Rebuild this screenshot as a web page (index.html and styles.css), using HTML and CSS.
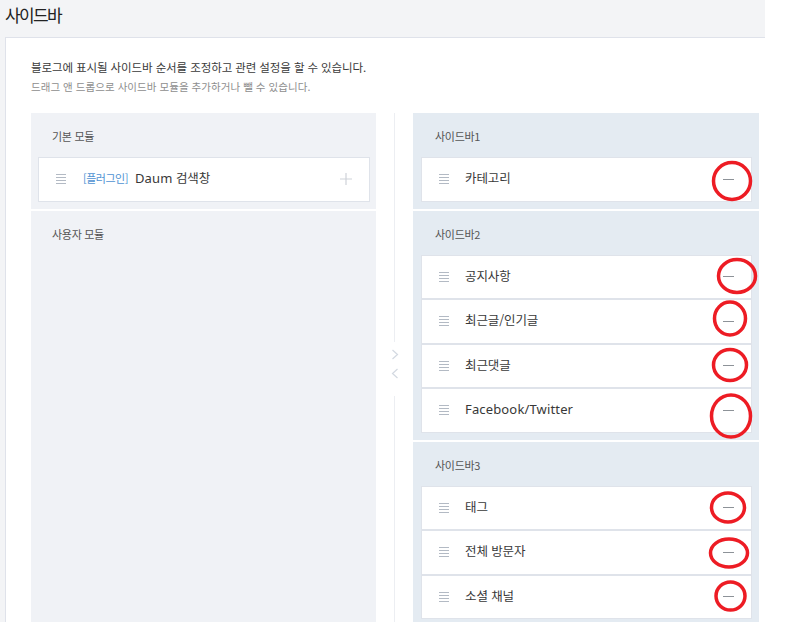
FILE: index.html
```html
<!DOCTYPE html>
<html lang="ko">
<head>
<meta charset="utf-8">
<title>사이드바</title>
<link rel="stylesheet" href="styles.css">
</head>
<body>
<div class="page">
  <div class="topbar"><h1 class="title">사이드바</h1></div>
  <div class="card">
    <p class="desc">블로그에 표시될 사이드바 순서를 조정하고 관련 설정을 할 수 있습니다.</p>
    <p class="sub">드래그 앤 드롭으로 사이드바 모듈을 추가하거나 뺄 수 있습니다.</p>
    <div class="board">
      <div class="col col-left">
        <section class="group">
          <h2 class="group-title">기본 모듈</h2>
          <ul class="list">
            <li class="item">
              <svg class="handle" width="10" height="10" viewBox="0 0 10 10"><path d="M0 0.5H10M0 3.5H10M0 6.5H10M0 9.5H10" stroke="#b3bac4" stroke-width="1"/></svg>
              <span class="tag">[플러그인]</span><span class="name"><span class="latin">Daum</span> 검색창</span>
              <svg class="plus" width="12" height="12" viewBox="0 0 12 12"><path d="M6 0V12M0 6H12" stroke="#cfd3d9" stroke-width="1.2"/></svg>
            </li>
          </ul>
        </section>
        <section class="group grow">
          <h2 class="group-title">사용자 모듈</h2>
        </section>
      </div>
      <div class="divider">
        <div class="vline top"></div>
        <div class="arrows">
          <svg width="8" height="11" viewBox="0 0 8 11"><polyline points="1.5,1 6.5,5.5 1.5,10" fill="none" stroke="#d3d9e1" stroke-width="1.2"/></svg>
          <svg width="8" height="11" viewBox="0 0 8 11"><polyline points="6.5,1 1.5,5.5 6.5,10" fill="none" stroke="#d3d9e1" stroke-width="1.2"/></svg>
        </div>
        <div class="vline rest"></div>
      </div>
      <div class="col col-right">
        <section class="group">
          <h2 class="group-title">사이드바1</h2>
          <ul class="list">
            <li class="item"><svg class="handle" width="10" height="10" viewBox="0 0 10 10"><path d="M0 0.5H10M0 3.5H10M0 6.5H10M0 9.5H10" stroke="#b3bac4" stroke-width="1"/></svg><span class="name">카테고리</span><span class="minus"></span></li>
          </ul>
        </section>
        <section class="group">
          <h2 class="group-title">사이드바2</h2>
          <ul class="list">
            <li class="item"><svg class="handle" width="10" height="10" viewBox="0 0 10 10"><path d="M0 0.5H10M0 3.5H10M0 6.5H10M0 9.5H10" stroke="#b3bac4" stroke-width="1"/></svg><span class="name">공지사항</span><span class="minus"></span></li>
            <li class="item"><svg class="handle" width="10" height="10" viewBox="0 0 10 10"><path d="M0 0.5H10M0 3.5H10M0 6.5H10M0 9.5H10" stroke="#b3bac4" stroke-width="1"/></svg><span class="name">최근글/인기글</span><span class="minus"></span></li>
            <li class="item"><svg class="handle" width="10" height="10" viewBox="0 0 10 10"><path d="M0 0.5H10M0 3.5H10M0 6.5H10M0 9.5H10" stroke="#b3bac4" stroke-width="1"/></svg><span class="name">최근댓글</span><span class="minus"></span></li>
            <li class="item"><svg class="handle" width="10" height="10" viewBox="0 0 10 10"><path d="M0 0.5H10M0 3.5H10M0 6.5H10M0 9.5H10" stroke="#b3bac4" stroke-width="1"/></svg><span class="name"><span class="latin">Facebook/Twitter</span></span><span class="minus"></span></li>
          </ul>
        </section>
        <section class="group grow">
          <h2 class="group-title">사이드바3</h2>
          <ul class="list">
            <li class="item"><svg class="handle" width="10" height="10" viewBox="0 0 10 10"><path d="M0 0.5H10M0 3.5H10M0 6.5H10M0 9.5H10" stroke="#b3bac4" stroke-width="1"/></svg><span class="name">태그</span><span class="minus"></span></li>
            <li class="item"><svg class="handle" width="10" height="10" viewBox="0 0 10 10"><path d="M0 0.5H10M0 3.5H10M0 6.5H10M0 9.5H10" stroke="#b3bac4" stroke-width="1"/></svg><span class="name">전체 방문자</span><span class="minus"></span></li>
            <li class="item"><svg class="handle" width="10" height="10" viewBox="0 0 10 10"><path d="M0 0.5H10M0 3.5H10M0 6.5H10M0 9.5H10" stroke="#b3bac4" stroke-width="1"/></svg><span class="name">소셜 채널</span><span class="minus"></span></li>
          </ul>
        </section>
      </div>
    </div>
  </div>
</div>
<svg class="marks" width="798" height="622" viewBox="0 0 798 622">
  <g fill="none" stroke="#ed1c24" stroke-width="3.5">
    <ellipse cx="732" cy="181" rx="18.5" ry="18.5"/>
    <ellipse cx="737" cy="276" rx="18.5" ry="16.5"/>
    <ellipse cx="730" cy="318.5" rx="15.5" ry="16.5"/>
    <ellipse cx="730" cy="365" rx="16.5" ry="15.5"/>
    <ellipse cx="731" cy="416" rx="19.5" ry="21"/>
    <ellipse cx="728" cy="507.5" rx="16.5" ry="14.5"/>
    <ellipse cx="729" cy="553" rx="18.5" ry="14"/>
    <ellipse cx="730.5" cy="596" rx="14.5" ry="14"/>
  </g>
</svg>
</body>
</html>
```

FILE: styles.css
```css
html, body {
  margin: 0;
  padding: 0;
  background: #ffffff;
}
body {
  font-family: "Noto Sans CJK KR", sans-serif;
  color: #333333;
  width: 798px;
  height: 622px;
  overflow: hidden;
  position: relative;
}
.page {
  width: 765px;
  background: #f3f4f6;
}
.topbar {
  height: 37px;
  padding-left: 5px;
  box-sizing: border-box;
}
.title {
  margin: 0;
  font-size: 17px;
  font-weight: 400;
  line-height: 30px;
  letter-spacing: -1.6px;
  color: #222222;
}
.card {
  margin-left: 5px;
  background: #ffffff;
  border-top: 1px solid #dfe2ea;
  border-left: 1px solid #dfe2ea;
  padding: 19px 6px 0 25px;
}
.desc {
  margin: 0;
  font-size: 11.5px;
  line-height: 20px;
  letter-spacing: -0.1px;
  color: #3a3a3a;
}
.sub {
  margin: 0;
  font-size: 10.5px;
  line-height: 20px;
  letter-spacing: 0.05px;
  color: #8e8e8e;
}
.board {
  margin-top: 16px;
  display: flex;
  align-items: stretch;
}
.col {
  display: flex;
  flex-direction: column;
  gap: 2px;
}
.col-left {
  width: 345px;
}
.col-right {
  width: 346px;
}
.group {
  background: #f0f2f6;
  padding: 0 6px 7px 7px;
}
.col-right .group {
  background: #e4ebf2;
  padding: 0 7px 7px 8px;
}
.grow {
  flex: 1;
}
.group-title {
  margin: 0;
  height: 44px;
  line-height: 46px;
  padding-left: 14px;
  font-size: 11px;
  font-weight: 400;
  letter-spacing: -0.3px;
  color: #555555;
}
.list {
  list-style: none;
  margin: 0;
  padding: 0;
}
.item {
  height: 44.5px;
  box-sizing: border-box;
  border: 1px solid #dfe3ea;
  background: #ffffff;
  display: flex;
  align-items: center;
  padding: 0 17px;
}
.handle {
  flex: none;
  margin-right: 16px;
}
.col-left .handle {
  margin-right: 17px;
}
.tag {
  font-size: 11px;
  letter-spacing: -0.5px;
  color: #4f93d3;
  margin-right: 7px;
  margin-bottom: 3px;
}
.name {
  flex: 1;
  font-size: 12.5px;
  letter-spacing: -0.1px;
  color: #383838;
  margin-bottom: 3px;
}
.latin {
  font-family: "Noto Sans", sans-serif;
  font-size: 13px;
  letter-spacing: 0.15px;
}
.plus {
  flex: none;
}
.minus {
  flex: none;
  width: 11px;
  height: 1px;
  background: #8d9298;
}
.divider {
  width: 37px;
  display: flex;
  flex-direction: column;
  align-items: center;
}
.vline {
  width: 1px;
  background: #eceef2;
}
.vline.top {
  height: 229px;
}
.vline.rest {
  flex: 1;
}
.arrows {
  height: 54px;
  box-sizing: border-box;
  padding-top: 7px;
  display: flex;
  flex-direction: column;
  align-items: center;
  gap: 8px;
}
.arrows svg {
  display: block;
}
.marks {
  position: absolute;
  left: 0;
  top: 0;
  pointer-events: none;
}
```
